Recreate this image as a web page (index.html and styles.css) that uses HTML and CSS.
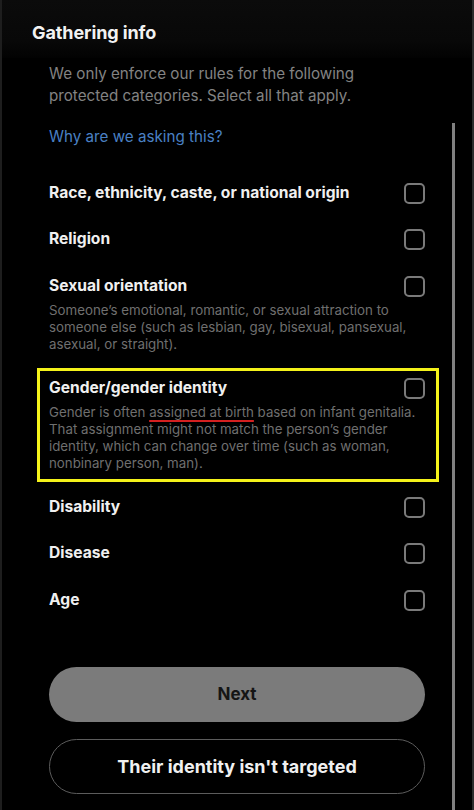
FILE: index.html
```html
<!DOCTYPE html>
<html lang="en">
<head>
<meta charset="utf-8">
<title>Gathering info</title>
<link rel="stylesheet" href="styles.css">
</head>
<body>
<div class="frame">
  <header class="header">
    <h1 class="title">Gathering info</h1>
  </header>
  <main class="content">
    <p class="intro">We only enforce our rules for the following protected categories. Select all that apply.</p>
    <a class="why" href="#">Why are we asking this?</a>
    <ul class="options">
      <li class="option">
        <div class="text"><div class="label">Race, ethnicity, caste, or national origin</div></div>
        <span class="box"></span>
      </li>
      <li class="option">
        <div class="text"><div class="label">Religion</div></div>
        <span class="box"></span>
      </li>
      <li class="option">
        <div class="text">
          <div class="label">Sexual orientation</div>
          <p class="desc">Someone’s emotional, romantic, or sexual attraction to someone else (such as lesbian, gay, bisexual, pansexual, asexual, or straight).</p>
        </div>
        <span class="box"></span>
      </li>
      <li class="option highlight">
        <div class="text">
          <div class="label">Gender/gender identity</div>
          <p class="desc">Gender is often <span class="red-underline">assigned at birth</span> based on infant genitalia. That assignment might not match the person’s gender identity, which can change over time (such as woman, nonbinary person, man).</p>
        </div>
        <span class="box"></span>
      </li>
      <li class="option">
        <div class="text"><div class="label">Disability</div></div>
        <span class="box"></span>
      </li>
      <li class="option">
        <div class="text"><div class="label">Disease</div></div>
        <span class="box"></span>
      </li>
      <li class="option">
        <div class="text"><div class="label">Age</div></div>
        <span class="box"></span>
      </li>
    </ul>
    <div class="actions">
      <button class="btn btn-next">Next</button>
      <button class="btn btn-outline">Their identity isn't targeted</button>
    </div>
  </main>
  <div class="scrollbar"></div>
</div>
</body>
</html>
```
FILE: styles.css
```css
* { box-sizing: border-box; }
html, body { margin: 0; padding: 0; background: #000; }
body {
  font-family: Inter, "Noto Sans", "Liberation Sans", sans-serif;
  color: #e7e9ea;
  width: 474px;
  height: 810px;
  overflow: hidden;
}
.frame {
  position: relative;
  width: 474px;
  height: 810px;
  background: #000;
  border-left: 2px solid #1e1e1e;
  border-right: 2px solid #2c2c2c;
}
.header {
  height: 58px;
  padding: 21px 0 0 30px;
  background: linear-gradient(to bottom, #0b0b0b, #080808 70%, #020202);
}
.title {
  margin: 0;
  font-size: 18px;
  line-height: 24px;
  font-weight: 700;
  color: #f2f2f2;
  letter-spacing: -0.1px;
}
.content {
  padding: 5px 47px 0 47px;
}
.intro {
  margin: 0;
  font-size: 15.2px;
  line-height: 22px;
  color: #838383;
}
.why {
  display: block;
  margin-top: 19px;
  font-size: 15.2px;
  line-height: 22px;
  color: #4a80c4;
  text-decoration: none;
}
.options {
  list-style: none;
  margin: 34px 0 0 0;
  padding: 0;
  display: flex;
  flex-direction: column;
  gap: 24.3px;
}
.option {
  display: flex;
  align-items: flex-start;
  justify-content: space-between;
}
.text { flex: 1; min-width: 0; }
.label {
  font-size: 15.6px;
  line-height: 22px;
  font-weight: 700;
  color: #f0f0f0;
}
.desc {
  margin: 5px 0 0 0;
  width: 366px;
  font-size: 13.3px;
  line-height: 17px;
  color: #6f6f6f;
}
.box {
  flex: none;
  width: 21px;
  height: 21px;
  margin-top: 1px;
  border: 2px solid #7a7a7a;
  border-radius: 5px;
}
.highlight {
  margin: -9px -14px -10px -12px;
  border: 3px solid #f4f21a;
  padding: 6px 11px 7px 9px;
}
.highlight .desc { width: 382px; }
.red-underline {
  text-decoration: underline;
  text-decoration-color: #d42020;
  text-decoration-thickness: 2px;
  text-underline-offset: 3px;
}
.actions {
  margin-top: 56px;
  display: flex;
  flex-direction: column;
  gap: 17px;
}
.btn {
  height: 55px;
  width: 100%;
  border-radius: 28px;
  font-family: inherit;
  font-size: 17px;
  font-weight: 700;
}
.btn-next {
  background: #7b7b7b;
  color: #151515;
  border: none;
}
.btn-outline {
  background: #000;
  color: #f0f0f0;
  border: 1px solid #5c5c5c;
  font-size: 18px;
}
.scrollbar {
  position: absolute;
  left: 450px;
  top: 123px;
  width: 3px;
  height: 687px;
  background: #808080;
}
```
